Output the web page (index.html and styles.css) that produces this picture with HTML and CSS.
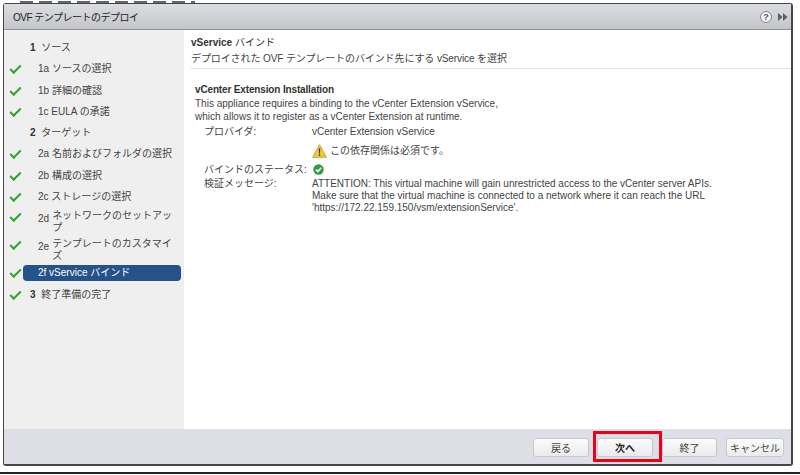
FILE: index.html
```html
<!DOCTYPE html>
<html lang="ja">
<head>
  <meta charset="UTF-8" />
  <title>OVF テンプレートのデプロイ</title>
  <link rel="stylesheet" href="styles.css">
</head>
<body>
  <div class="scrap"></div>
  <div class="dialog">
    <div class="titlebar">
      <span class="title">OVF テンプレートのデプロイ</span>
      <span class="help">?</span>
      <svg class="expand" width="10" height="8" viewBox="0 0 10 8"><path d="M0 0l4.500 4-4.500 4zM5 0l4.500 4-4.500 4z" fill="#5a5d62"/></svg>
    </div>
    <div class="main">
      <ul class="steps">
        <li class="step head"><b>1</b> ソース</li>
        <li class="step sub done">1a ソースの選択</li>
        <li class="step sub done">1b 詳細の確認</li>
        <li class="step sub done">1c EULA の承諾</li>
        <li class="step head"><b>2</b> ターゲット</li>
        <li class="step sub done">2a 名前およびフォルダの選択</li>
        <li class="step sub done">2b 構成の選択</li>
        <li class="step sub done">2c ストレージの選択</li>
        <li class="step sub done wrap"><span class="num">2d</span><span>ネットワークのセットアップ</span></li>
        <li class="step sub done wrap"><span class="num">2e</span><span>テンプレートのカスタマイズ</span></li>
        <li class="step sub done current">2f vService バインド</li>
        <li class="step head done"><b>3</b> 終了準備の完了</li>
      </ul>
      <div class="content">
        <div class="content-head">
          <h2>vService <span>バインド</span></h2>
          <p>デプロイされた OVF テンプレートのバインド先にする vService を選択</p>
        </div>
        <div class="binding">
          <h3>vCenter Extension Installation</h3>
          <p class="intro">This appliance requires a binding to the vCenter Extension vService,<br>which allows it to register as a vCenter Extension at runtime.</p>
          <div class="fields">
            <div class="label">プロバイダ:</div>
            <div>vCenter Extension vService</div>
            <div></div>
            <div class="warn">
              <svg width="15" height="14" viewBox="0 0 15 14"><path d="M7.500.8L14.400 13.300H.6z" fill="#f3c93a" stroke="#b8962a" stroke-width=".8" stroke-linejoin="round"/><path d="M6.800 4.500h1.400l-.2 5h-1zM6.800 10.300h1.400v1.500H6.800z" fill="#2b2b2b"/></svg>
              <span>この依存関係は必須です。</span>
            </div>
            <div class="label">バインドのステータス:</div>
            <div class="status">
              <svg width="11" height="11" viewBox="0 0 11 11"><circle cx="5.500" cy="5.500" r="5.200" fill="#2f9e3f"/><path d="M2.900 5.600l1.900 1.900 3.400-3.700" fill="none" stroke="#fff" stroke-width="1.600"/></svg>
            </div>
            <div class="label">検証メッセージ:</div>
            <div class="message">ATTENTION: This virtual machine will gain unrestricted access to the vCenter server APIs.<br>Make sure that the virtual machine is connected to a network where it can reach the URL<br>'https://172.22.159.150/vsm/extensionService'.</div>
          </div>
        </div>
      </div>
    </div>
    <div class="footer">
      <button class="back">戻る</button>
      <button class="next">次へ</button>
      <button class="finish">終了</button>
      <button class="cancel">キャンセル</button>
    </div>
  </div>
  <div class="bottom-line"></div>
</body>
</html>
```

FILE: styles.css
```css
body {
  margin: 0;
  background-color: white;
  font-family: "Liberation Sans", "Noto Sans CJK JP", sans-serif;
  font-size: 10px;
  color: #444;
  overflow: hidden;
}
/* bit of the window behind the dialog */
.scrap {
  width: 175px;
  height: 2px;
  margin: 1px 0 0 20px;
  background: repeating-linear-gradient(90deg, #666 0 13px, transparent 13px 19px);
}
.dialog {
  width: 787px;
  height: 460px;
  margin: 0 0 0 3px;
  border: 1px solid #44464a;
  border-right-width: 2px;
  border-bottom-width: 2px;
  border-radius: 3px;
  display: flex;
  flex-direction: column;
}
.titlebar {
  height: 26px;
  flex: none;
  box-sizing: border-box;
  display: flex;
  align-items: center;
  padding: 0 3px 0 9px;
  background: linear-gradient(#dcdde0, #c3c5c9);
  border-bottom: 1px solid #8f9296;
}
.title {
  flex: 1;
  font-size: 10px;
  letter-spacing: -0.5px;
  color: #222;
}
.help {
  width: 10px;
  height: 10px;
  border-radius: 50%;
  border: 1.500px solid #85888c;
  background-color: #f2f2f2;
  color: #55585c;
  font-weight: bold;
  font-size: 9px;
  line-height: 10px;
  text-align: center;
  margin-right: 6px;
}
.main {
  flex: 1;
  display: flex;
  min-height: 0;
}
.steps {
  list-style-type: none;
  margin: 0;
  padding: 7px 3px 0 0;
  width: 177px;
  flex: none;
  background-color: #efefef;
}
.step {
  position: relative;
  min-height: 21.300px;
  box-sizing: border-box;
  padding: 4px 4px 3px 26px;
  line-height: 14px;
}
.step b {
  color: #333;
  margin-right: 3px;
}
.step.sub {
  padding-left: 34px;
}
.step.done::before {
  content: "";
  position: absolute;
  left: 6px;
  top: 7px;
  width: 9px;
  height: 4px;
  border-left: 2px solid #2fa52f;
  border-bottom: 2px solid #2fa52f;
  transform: rotate(-45deg);
}
.step.wrap {
  display: flex;
  gap: 3px;
  min-height: 28px;
  line-height: 11.500px;
  padding-top: 3px;
  padding-bottom: 1px;
  padding-right: 8px;
}
.step.wrap::before {
  top: 6px;
}
.step.wrap .num {
  flex: none;
  padding-top: 3px;
}
.step.current {
  color: white;
  min-height: 16px;
  padding-top: 1px;
  padding-bottom: 1px;
  margin: 2px 0 3px 19px;
  padding-left: 15px;
  background-color: #25528a;
  border-radius: 4px;
}
.step.current::before {
  left: -13px;
  top: 4px;
}
.content {
  flex: 1;
  background-color: white;
  padding: 6px 0 0 7px;
  line-height: 14px;
}
.content-head {
  padding-bottom: 2px;
  border-bottom: 1px solid #e2e2e2;
}
.content-head h2 {
  margin: 0 0 2px;
  font-size: 10px;
  color: #333;
}
.content-head h2 span {
  font-weight: normal;
}
.content-head p {
  margin: 0;
  letter-spacing: -0.1px;
}
.binding {
  padding: 14px 0 0 4px;
}
.binding h3 {
  margin: 0;
  font-size: 10px;
  letter-spacing: -0.15px;
  line-height: 14px;
  color: #333;
}
.intro {
  margin: 0;
  line-height: 13px;
}
.fields {
  display: grid;
  grid-template-columns: 108px 1fr;
  padding: 2px 0 0 9px;
}
.warn {
  display: flex;
  align-items: center;
  gap: 3px;
  height: 24px;
}
.status {
  display: flex;
  align-items: center;
  padding-left: 1px;
  height: 13px;
}
.message {
  line-height: 12px;
  padding-top: 1px;
}
.footer {
  height: 35px;
  flex: none;
  box-sizing: border-box;
  display: flex;
  justify-content: flex-end;
  align-items: center;
  gap: 9px;
  padding: 2px 7px 0 0;
  background-color: #dedee6;
}
.footer button {
  position: relative;
  width: 56px;
  height: 19px;
  padding: 0;
  font-family: inherit;
  font-size: 10px;
  color: #444;
  border: 1px solid #c8c9ce;
  border-radius: 3px;
  background: linear-gradient(#fbfbfb, #ebebee);
}
.footer button.back {
  margin-right: -1px;
}
.footer button.finish {
  width: 55px;
}
.footer button.cancel {
  width: 58px;
}
.footer button.next {
  font-weight: bold;
  color: #222;
}
.footer button.next::after {
  content: "";
  position: absolute;
  left: -5px;
  right: -10px;
  top: -8px;
  bottom: -6px;
  border: 3px solid #f00018;
}
.expand {
  flex: none;
}
.bottom-line {
  height: 2px;
  margin-top: 6px;
  background-color: #222;
}
```
